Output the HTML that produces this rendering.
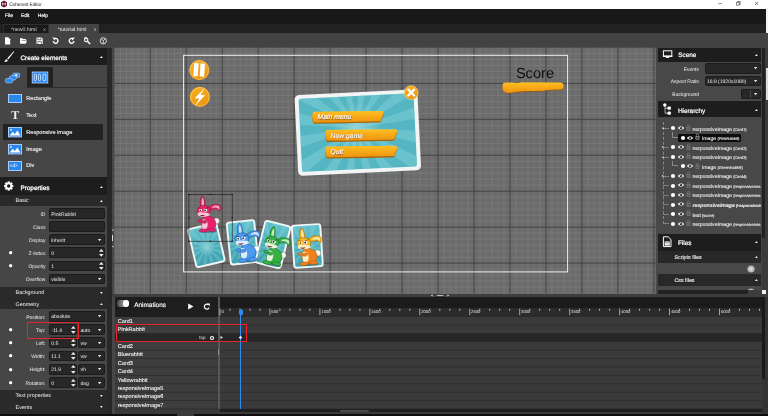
<!DOCTYPE html>
<html><head><meta charset="utf-8"><title>Coherent Editor</title>
<style>
*{box-sizing:border-box;margin:0;padding:0}
html,body{width:768px;height:416px;overflow:hidden;background:#434343;text-rendering:geometricPrecision;font-family:"Liberation Sans",sans-serif;color:#fff}
#root{position:absolute;left:0;top:0;width:768px;height:416px;overflow:hidden;will-change:transform;background:#434343}
.a{position:absolute}
.t{position:absolute;white-space:nowrap;line-height:1;color:#f2f2f2}
.inp{position:absolute;background:#272727;border:1px solid #1b1b1b;border-radius:1.500px}
.lbl{position:absolute;white-space:nowrap;line-height:1;color:#eee;text-align:right}
.v{position:absolute;white-space:nowrap;line-height:1;color:#eee}
</style></head><body><div id="root">
<div class="a" style="left:0px;top:0px;width:768px;height:8.8px;background:#fff;"></div>
<div class="a" style="left:0px;top:8.8px;width:768px;height:14.9px;background:#181818;"></div>
<div class="a" style="left:0px;top:23.7px;width:768px;height:9.5px;background:#212121;"></div>
<div class="a" style="left:0px;top:33px;width:768px;height:14.8px;background:#434343;"></div>
<div class="a" style="left:766.2px;top:8.8px;width:1.8px;height:24.4px;background:#f4f4f4;"></div>
<svg class="a" style="left:0;top:0" width="9" height="9" viewBox="0 0 9 9"><polygon points="4,0.6 7,2.3 7,5.900 4,7.600 1,5.900 1,2.300" fill="#6b1a3a"/><path d="M2.600 5.400V3L4 4.400L5.400 3V5.400" stroke="#fff" stroke-width=".7" fill="none"/></svg>
<div class="t" style="left:9.2px;top:4px;font-size:4.9px;color:#1c1c1c;letter-spacing:-.12px">Coherent Editor</div>
<svg class="a" style="left:712px;top:0" width="56" height="9" viewBox="0 0 56 9"><path d="M6.500 3.600h3.400M24.500 2.400h2.800v2.800h-2.800zM25.400 2.400v-.9h2.800v2.800h-.9M43 1.800l3.200 3.200M46.200 1.800L43 5" stroke="#222" stroke-width=".55" fill="none"/></svg>
<div class="t" style="left:5px;top:15px;font-size:4.9px;color:#f4f4f4;-webkit-text-stroke:.2px #f4f4f4">File</div>
<div class="t" style="left:21px;top:15px;font-size:4.9px;color:#f4f4f4;-webkit-text-stroke:.2px #f4f4f4">Edit</div>
<div class="t" style="left:37.8px;top:15px;font-size:4.9px;color:#f4f4f4;-webkit-text-stroke:.2px #f4f4f4">Help</div>
<div class="a" style="left:3px;top:24px;width:45.800px;height:9.200px;background:#1a1a1a;border:1px solid #303030;border-bottom:0"></div>
<div class="a" style="left:49.2px;top:23.8px;width:49.9px;height:9.4px;background:#434343;"></div>
<div class="t" style="left:10.9px;top:28px;font-size:5.2px;color:#d8d8d8;">*new0.html</div>
<div class="t" style="left:43.2px;top:28px;font-size:5px;color:#aaa;">x</div>
<div class="t" style="left:57.7px;top:28px;font-size:5.2px;color:#e6e6e6;">*tutorial.html</div>
<div class="t" style="left:93.8px;top:28px;font-size:5px;color:#c0c0c0;">x</div>
<svg class="a" style="left:0;top:33px" width="112" height="15" viewBox="0 0 112 15">
<g fill="#fff" stroke="none">
<path d="M5 4.200h3.200l2 2v5.200H5z"/>
<path d="M20 5.200h2.500l.8.8H26v1h-4.300L20.600 10.200H20zM21.200 7.600h5.800l-1.200 3.200h-5.600z"/>
<path d="M36.500 4.400h5.200l1 1v5.600h-6.200z"/>
</g>
<path d="M37.800 4.600v2.200h3.200V4.600M37.800 10.800V8.600h3.600v2.200" stroke="#434343" stroke-width=".7" fill="none"/>
<g fill="none" stroke="#fff" stroke-width="1.200">
<path d="M53.900 6.100A2.400 2.400 0 1 1 53.200 8.200" stroke-width="1.350"/>
<path d="M73.300 6.100A2.400 2.400 0 1 0 74 8.200" stroke-width="1.350"/>
<circle cx="86.200" cy="7" r="1.700" stroke-width="1.100"/><path d="M87.600 8.400l2.600 2.600" stroke-width="1.400"/><path d="M84 5.200l1.600-.8 1.600.6" stroke-width=".9"/>
<circle cx="103.300" cy="7.800" r="3.100" stroke-width=".8"/><path d="M103.300 10.600V7.600M101.300 5.800l2 1.800 2-1.800" stroke-width=".7"/>
</g>
<path d="M52.200 4.600l3.100 .2-.2 3z" fill="#fff"/><path d="M75 4.600l-3.100 .2 .2 3z" fill="#fff"/>
</svg>
<div class="a" style="left:0px;top:47.8px;width:106.6px;height:368.2px;background:#464646;"></div>
<div class="a" style="left:106.6px;top:47.8px;width:5.2px;height:368.2px;background:#282828;"></div>
<div class="a" style="left:111.8px;top:47.8px;width:2.6px;height:368.2px;background:#474747;"></div>
<svg class="a" style="left:110.6px;top:227.9px" width="4" height="3.6" viewBox="0 0 4 3.6"><path d="M1 2.6L2 1L3 2.6z" fill="#ddd"/></svg>
<div class="a" style="left:112.3px;top:234.8px;width:0.8px;height:6.4px;background:#ddd;"></div>
<svg class="a" style="left:110.6px;top:244.7px" width="4" height="3.6" viewBox="0 0 4 3.6"><path d="M1 1L2 2.6L3 1z" fill="#ddd"/></svg>
<div class="a" style="left:0px;top:47.8px;width:106.6px;height:17px;background:#1d1d1d;"></div>
<svg class="a" style="left:3px;top:50px" width="12" height="14" viewBox="0 0 12 14"><path d="M10.600 1.200L4.200 8.600l1 1L11.200 1.800z" fill="#fff"/><path d="M3.600 9.200c-1.400.2-1.200 1.800-2.600 2.400 1.800.6 3.600-.2 3.800-1.400z" fill="#fff"/></svg>
<div class="t" style="left:20.4px;top:56px;font-size:6.4px;color:#fff;-webkit-text-stroke:.25px #fff">Create elements</div>
<svg class="a" style="left:98.9px;top:55.15px" width="4.8" height="4.1" viewBox="0 0 4.8 4.1"><path d="M1 3.1L2.4 1L3.8 3.1z" fill="#eee"/></svg>
<div class="a" style="left:26.9px;top:66.9px;width:26px;height:20.6px;background:#222;"></div>
<div class="a" style="left:26.9px;top:87.2px;width:79.7px;height:0.8px;background:#2e2e2e;"></div>
<svg class="a" style="left:4px;top:70px" width="18" height="15" viewBox="0 0 18 15"><g fill="#2b86ee" stroke="#9cc6fa" stroke-width=".7"><rect x="8.800" y="3.200" width="6.800" height="4.200" rx=".8"/><rect x="5" y="5.800" width="7.400" height="4.200" rx="1.600" transform="skewX(-18) translate(2.600 0)"/><rect x="1.400" y="8.600" width="7.200" height="4.200" rx="1.400"/></g><rect x="11" y="4.200" width="2.400" height="2" fill="#dfeeff"/></svg>
<svg class="a" style="left:31px;top:71px" width="18" height="13" viewBox="0 0 18 13"><rect x="1.200" y="1" width="15.600" height="11" fill="#2b86ee" stroke="#b9d6fb" stroke-width=".8"/><g fill="none" stroke="#e8f2ff" stroke-width=".8"><rect x="3.300" y="3.200" width="2.200" height="6.400" rx="1"/><rect x="7.400" y="3.200" width="2.200" height="6.400" rx="1"/><rect x="12" y="3.200" width="2.800" height="6.400" rx=".6"/></g></svg>
<div class="a" style="left:8px;top:94px;width:14px;height:9.400px;background:#2b86ee;border:1px solid #a9cdfb"></div>
<div class="v" style="left:26.3px;top:97px;font-size:5.6px;color:#f0f0f0;-webkit-text-stroke:.12px #f0f0f0">Rectangle</div>
<div class="t" style="left:11.300px;top:108.800px;font-size:12px;font-family:'Liberation Serif',serif;font-weight:bold;color:#f4f1e6">T</div>
<div class="v" style="left:26.3px;top:114px;font-size:5.6px;color:#f0f0f0;-webkit-text-stroke:.12px #f0f0f0">Text</div>
<div class="a" style="left:3px;top:123.8px;width:100px;height:16.4px;background:#222;"></div>
<svg class="a" style="left:8px;top:127px" width="14" height="11" viewBox="0 0 14 11"><rect x=".5" y=".5" width="13" height="9.400" fill="#2b86ee" stroke="#a9cdfb"/><path d="M1.600 8.600l3.200-3.800 2 2.200 2.600-3.600 3 5.200z" fill="#fff"/><circle cx="3" cy="2.800" r=".9" fill="#fff"/></svg>
<div class="v" style="left:26.3px;top:131px;font-size:5.6px;color:#f0f0f0;-webkit-text-stroke:.12px #f0f0f0">Responsive image</div>
<svg class="a" style="left:8px;top:144px" width="14" height="11" viewBox="0 0 14 11"><rect x=".5" y=".5" width="13" height="9.400" fill="#2b86ee" stroke="#a9cdfb"/><path d="M1.600 8.600l3.200-3.800 2 2.200 2.600-3.600 3 5.200z" fill="#fff"/><circle cx="3" cy="2.800" r=".9" fill="#fff"/></svg>
<div class="v" style="left:26.3px;top:148px;font-size:5.6px;color:#f0f0f0;-webkit-text-stroke:.12px #f0f0f0">Image</div>
<div class="a" style="left:8px;top:161px;width:14px;height:9.800px;background:#2b86ee;border:1px solid #a9cdfb"></div>
<div class="t" style="left:9.6px;top:165px;font-size:4.8px;color:#fff;">&lt;d&gt;</div>
<div class="v" style="left:26.3px;top:164px;font-size:5.6px;color:#f0f0f0;-webkit-text-stroke:.12px #f0f0f0">Div</div>
<div class="a" style="left:0px;top:177.3px;width:106.6px;height:17.4px;background:#1d1d1d;"></div>
<svg class="a" style="left:3px;top:179.600px" width="12" height="12" viewBox="0 0 12 12"><g transform="translate(5.700 6) scale(.92)"><g fill="#fff"><rect x="-1.200" y="-5" width="2.400" height="10"/><rect x="-1.200" y="-5" width="2.400" height="10" transform="rotate(45)"/><rect x="-1.200" y="-5" width="2.400" height="10" transform="rotate(90)"/><rect x="-1.200" y="-5" width="2.400" height="10" transform="rotate(135)"/><circle r="3.700"/></g><circle r="1.900" fill="#1d1d1d"/></g></svg>
<div class="t" style="left:20.4px;top:186px;font-size:6.4px;color:#fff;-webkit-text-stroke:.25px #fff">Properties</div>
<svg class="a" style="left:98.9px;top:184.95px" width="4.8" height="4.1" viewBox="0 0 4.8 4.1"><path d="M1 3.1L2.4 1L3.8 3.1z" fill="#eee"/></svg>
<div class="a" style="left:0px;top:194.7px;width:106.6px;height:10.9px;background:#2a2a2a;"></div>
<div class="v" style="left:15.6px;top:199px;font-size:5.4px;">Basic</div>
<svg class="a" style="left:98.9px;top:198.95px" width="4.8" height="4.1" viewBox="0 0 4.8 4.1"><path d="M1 3.1L2.4 1L3.8 3.1z" fill="#eee"/></svg>
<div class="lbl" style="left:-34.6px;width:80px;top:213px;font-size:5px;">ID</div>
<div class="inp" style="left:49.2px;top:208px;width:56px;height:10.8px"></div>
<div class="v" style="left:51.2px;top:213px;font-size:5.1px;">PinkRabbit</div>
<div class="lbl" style="left:-34.6px;width:80px;top:226px;font-size:5px;">Class</div>
<div class="inp" style="left:49.2px;top:221.1px;width:56px;height:10.8px"></div>
<div class="lbl" style="left:-34.6px;width:80px;top:239px;font-size:5px;">Display</div>
<div class="inp" style="left:49.2px;top:234.1px;width:56px;height:10.8px"></div>
<div class="v" style="left:51.2px;top:239px;font-size:5.1px;">inherit</div>
<svg class="a" style="left:97px;top:237.65px" width="5.2" height="4.3" viewBox="0 0 5.2 4.3"><path d="M1 1L2.6 3.3L4.2 1z" fill="#eee"/></svg>
<svg class="a" style="left:8.15px;top:250.05px" width="5.3" height="5.3" viewBox="0 0 5.3 5.3"><circle cx="2.65" cy="2.65" r="1.65" fill="#fff"/></svg>
<div class="lbl" style="left:-34.6px;width:80px;top:252px;font-size:5px;">Z-Index</div>
<div class="inp" style="left:49.2px;top:247.3px;width:56px;height:10.8px"></div>
<div class="v" style="left:51.2px;top:252px;font-size:5.1px;">0</div>
<svg class="a" style="left:97.9px;top:247.8px" width="6.6" height="4.8" viewBox="0 0 6.6 4.8"><path d="M1 3.8L3.3 1L5.6 3.8z" fill="#eee"/></svg>
<svg class="a" style="left:97.9px;top:253px" width="6.6" height="4.8" viewBox="0 0 6.6 4.8"><path d="M1 1L3.3 3.8L5.6 1z" fill="#eee"/></svg>
<svg class="a" style="left:8.15px;top:263.25px" width="5.3" height="5.3" viewBox="0 0 5.3 5.3"><circle cx="2.65" cy="2.65" r="1.65" fill="#fff"/></svg>
<div class="lbl" style="left:-34.6px;width:80px;top:265px;font-size:5px;">Opacity</div>
<div class="inp" style="left:49.2px;top:260.5px;width:56px;height:10.8px"></div>
<div class="v" style="left:51.2px;top:265px;font-size:5.1px;">1</div>
<svg class="a" style="left:97.9px;top:261px" width="6.6" height="4.8" viewBox="0 0 6.6 4.8"><path d="M1 3.8L3.3 1L5.6 3.8z" fill="#eee"/></svg>
<svg class="a" style="left:97.9px;top:266.2px" width="6.6" height="4.8" viewBox="0 0 6.6 4.8"><path d="M1 1L3.3 3.8L5.6 1z" fill="#eee"/></svg>
<div class="lbl" style="left:-34.6px;width:80px;top:278px;font-size:5px;">Overflow</div>
<div class="inp" style="left:49.2px;top:273.7px;width:56px;height:10.8px"></div>
<div class="v" style="left:51.2px;top:278px;font-size:5.1px;">visible</div>
<svg class="a" style="left:97px;top:277.25px" width="5.2" height="4.3" viewBox="0 0 5.2 4.3"><path d="M1 1L2.6 3.3L4.2 1z" fill="#eee"/></svg>
<div class="a" style="left:0px;top:287.1px;width:106.6px;height:21.8px;background:#2a2a2a;"></div>
<div class="v" style="left:15.6px;top:291px;font-size:5.4px;">Background</div>
<svg class="a" style="left:98.9px;top:290.55px" width="4.8" height="4.1" viewBox="0 0 4.8 4.1"><path d="M1 1L2.4 3.1L3.8 1z" fill="#eee"/></svg>
<div class="v" style="left:15.6px;top:303px;font-size:5.4px;">Geometry</div>
<svg class="a" style="left:98.9px;top:302.35px" width="4.8" height="4.1" viewBox="0 0 4.8 4.1"><path d="M1 3.1L2.4 1L3.8 3.1z" fill="#eee"/></svg>
<div class="lbl" style="left:-34.6px;width:80px;top:316px;font-size:5px;">Position:</div>
<div class="inp" style="left:49.2px;top:310.8px;width:56px;height:10.8px"></div>
<div class="v" style="left:51.2px;top:315px;font-size:5.1px;">absolute</div>
<svg class="a" style="left:97px;top:314.35px" width="5.2" height="4.3" viewBox="0 0 5.2 4.3"><path d="M1 1L2.6 3.3L4.2 1z" fill="#eee"/></svg>
<svg class="a" style="left:8.15px;top:326.85px" width="5.3" height="5.3" viewBox="0 0 5.3 5.3"><circle cx="2.65" cy="2.65" r="1.65" fill="#fff"/></svg>
<div class="lbl" style="left:-34.6px;width:80px;top:329px;font-size:5px;">Top:</div>
<div class="inp" style="left:49.2px;top:324.1px;width:28px;height:10.8px"></div>
<div class="v" style="left:51.2px;top:329px;font-size:5.1px;">-11.6</div>
<svg class="a" style="left:70.3px;top:324.6px" width="6.6" height="4.8" viewBox="0 0 6.6 4.8"><path d="M1 3.8L3.3 1L5.6 3.8z" fill="#eee"/></svg>
<svg class="a" style="left:70.3px;top:329.8px" width="6.6" height="4.8" viewBox="0 0 6.6 4.8"><path d="M1 1L3.3 3.8L5.6 1z" fill="#eee"/></svg>
<div class="inp" style="left:78.4px;top:324.1px;width:26.8px;height:10.8px"></div>
<div class="v" style="left:80.4px;top:329px;font-size:5.1px;">auto</div>
<svg class="a" style="left:97px;top:327.65px" width="5.2" height="4.3" viewBox="0 0 5.2 4.3"><path d="M1 1L2.6 3.3L4.2 1z" fill="#eee"/></svg>
<svg class="a" style="left:8.15px;top:340.05px" width="5.3" height="5.3" viewBox="0 0 5.3 5.3"><circle cx="2.65" cy="2.65" r="1.65" fill="#fff"/></svg>
<div class="lbl" style="left:-34.6px;width:80px;top:342px;font-size:5px;">Left:</div>
<div class="inp" style="left:49.2px;top:337.3px;width:28px;height:10.8px"></div>
<div class="v" style="left:51.2px;top:342px;font-size:5.1px;">0.5</div>
<svg class="a" style="left:70.3px;top:337.8px" width="6.6" height="4.8" viewBox="0 0 6.6 4.8"><path d="M1 3.8L3.3 1L5.6 3.8z" fill="#eee"/></svg>
<svg class="a" style="left:70.3px;top:343px" width="6.6" height="4.8" viewBox="0 0 6.6 4.8"><path d="M1 1L3.3 3.8L5.6 1z" fill="#eee"/></svg>
<div class="inp" style="left:78.4px;top:337.3px;width:26.8px;height:10.8px"></div>
<div class="v" style="left:80.4px;top:342px;font-size:5.1px;">vw</div>
<svg class="a" style="left:97px;top:340.85px" width="5.2" height="4.3" viewBox="0 0 5.2 4.3"><path d="M1 1L2.6 3.3L4.2 1z" fill="#eee"/></svg>
<svg class="a" style="left:8.15px;top:353.25px" width="5.3" height="5.3" viewBox="0 0 5.3 5.3"><circle cx="2.65" cy="2.65" r="1.65" fill="#fff"/></svg>
<div class="lbl" style="left:-34.6px;width:80px;top:355px;font-size:5px;">Width:</div>
<div class="inp" style="left:49.2px;top:350.5px;width:28px;height:10.8px"></div>
<div class="v" style="left:51.2px;top:355px;font-size:5.1px;">11.1</div>
<svg class="a" style="left:70.3px;top:351px" width="6.6" height="4.8" viewBox="0 0 6.6 4.8"><path d="M1 3.8L3.3 1L5.6 3.8z" fill="#eee"/></svg>
<svg class="a" style="left:70.3px;top:356.2px" width="6.6" height="4.8" viewBox="0 0 6.6 4.8"><path d="M1 1L3.3 3.8L5.6 1z" fill="#eee"/></svg>
<div class="inp" style="left:78.4px;top:350.5px;width:26.8px;height:10.8px"></div>
<div class="v" style="left:80.4px;top:355px;font-size:5.1px;">vw</div>
<svg class="a" style="left:97px;top:354.05px" width="5.2" height="4.3" viewBox="0 0 5.2 4.3"><path d="M1 1L2.6 3.3L4.2 1z" fill="#eee"/></svg>
<svg class="a" style="left:8.15px;top:366.55px" width="5.3" height="5.3" viewBox="0 0 5.3 5.3"><circle cx="2.65" cy="2.65" r="1.65" fill="#fff"/></svg>
<div class="lbl" style="left:-34.6px;width:80px;top:368px;font-size:5px;">Height:</div>
<div class="inp" style="left:49.2px;top:363.8px;width:28px;height:10.8px"></div>
<div class="v" style="left:51.2px;top:368px;font-size:5.1px;">21.9</div>
<svg class="a" style="left:70.3px;top:364.3px" width="6.6" height="4.8" viewBox="0 0 6.6 4.8"><path d="M1 3.8L3.3 1L5.6 3.8z" fill="#eee"/></svg>
<svg class="a" style="left:70.3px;top:369.5px" width="6.6" height="4.8" viewBox="0 0 6.6 4.8"><path d="M1 1L3.3 3.8L5.6 1z" fill="#eee"/></svg>
<div class="inp" style="left:78.4px;top:363.8px;width:26.8px;height:10.8px"></div>
<div class="v" style="left:80.4px;top:368px;font-size:5.1px;">vh</div>
<svg class="a" style="left:97px;top:367.35px" width="5.2" height="4.3" viewBox="0 0 5.2 4.3"><path d="M1 1L2.6 3.3L4.2 1z" fill="#eee"/></svg>
<svg class="a" style="left:8.15px;top:379.75px" width="5.3" height="5.3" viewBox="0 0 5.3 5.3"><circle cx="2.65" cy="2.65" r="1.65" fill="#fff"/></svg>
<div class="lbl" style="left:-34.6px;width:80px;top:382px;font-size:5px;">Rotation:</div>
<div class="inp" style="left:49.2px;top:377px;width:28px;height:10.8px"></div>
<div class="v" style="left:51.2px;top:382px;font-size:5.1px;">0</div>
<svg class="a" style="left:70.3px;top:377.5px" width="6.6" height="4.8" viewBox="0 0 6.6 4.8"><path d="M1 3.8L3.3 1L5.6 3.8z" fill="#eee"/></svg>
<svg class="a" style="left:70.3px;top:382.7px" width="6.6" height="4.8" viewBox="0 0 6.6 4.8"><path d="M1 1L3.3 3.8L5.6 1z" fill="#eee"/></svg>
<div class="inp" style="left:78.4px;top:377px;width:26.8px;height:10.8px"></div>
<div class="v" style="left:80.4px;top:382px;font-size:5.1px;">deg</div>
<svg class="a" style="left:97px;top:380.55px" width="5.2" height="4.3" viewBox="0 0 5.2 4.3"><path d="M1 1L2.6 3.3L4.2 1z" fill="#eee"/></svg>
<div class="a" style="left:27px;top:322.200px;width:52.200px;height:16.400px;border:1px solid #e8232e"></div>
<div class="a" style="left:0px;top:390.1px;width:106.6px;height:24.3px;background:#2a2a2a;"></div>
<div class="v" style="left:15.6px;top:394px;font-size:5.4px;">Text properties</div>
<svg class="a" style="left:98.9px;top:393.55px" width="4.8" height="4.1" viewBox="0 0 4.8 4.1"><path d="M1 1L2.4 3.1L3.8 1z" fill="#eee"/></svg>
<div class="v" style="left:15.6px;top:406px;font-size:5.4px;">Events</div>
<svg class="a" style="left:98.9px;top:404.95px" width="4.8" height="4.1" viewBox="0 0 4.8 4.1"><path d="M1 1L2.4 3.1L3.8 1z" fill="#eee"/></svg>
<svg class="a" style="left:113px;top:47px" width="544" height="248" viewBox="113 47 544 248" font-family="Liberation Sans, sans-serif">
<defs><pattern id="gmin" x="114.450" y="47.460" width="5.993" height="5.993" patternUnits="userSpaceOnUse"><path d="M0 0H6.100M0 0V6.100" stroke="#7b7b7b" stroke-width=".8" fill="none"/></pattern>
<pattern id="gmaj" x="114.450" y="47.460" width="35.960" height="35.960" patternUnits="userSpaceOnUse"><path d="M0 0H36.200M0 0V36.200" stroke="#3a3a3a" stroke-width="1.100" fill="none"/></pattern><linearGradient id="cg" x1="0" y1="0" x2="0" y2="1"><stop offset="0" stop-color="#63c0cb"/><stop offset="1" stop-color="#3e9fad"/></linearGradient><linearGradient id="og" x1="0" y1="0" x2=".6" y2="1"><stop offset="0" stop-color="#fbb324"/><stop offset="1" stop-color="#ec9610"/></linearGradient><linearGradient id="bg" x1="0" y1="0" x2="0" y2="1"><stop offset="0" stop-color="#fcc024"/><stop offset=".5" stop-color="#f7a916"/><stop offset="1" stop-color="#ee9410"/></linearGradient><radialGradient id="glow"><stop offset="0" stop-color="#b8eaee" stop-opacity=".55"/><stop offset="1" stop-color="#b8eaee" stop-opacity="0"/></radialGradient></defs>
<rect x="114.300" y="47.700" width="541.600" height="246" fill="#6b6b6b"/>
<path d="M120.30 47.700V293.700M126.29 47.700V293.700M132.28 47.700V293.700M138.28 47.700V293.700M144.28 47.700V293.700M156.26 47.700V293.700M162.26 47.700V293.700M168.25 47.700V293.700M174.25 47.700V293.700M180.25 47.700V293.700M192.24 47.700V293.700M198.23 47.700V293.700M204.22 47.700V293.700M210.22 47.700V293.700M216.22 47.700V293.700M228.20 47.700V293.700M234.20 47.700V293.700M240.19 47.700V293.700M246.19 47.700V293.700M252.19 47.700V293.700M264.18 47.700V293.700M270.17 47.700V293.700M276.16 47.700V293.700M282.16 47.700V293.700M288.15 47.700V293.700M300.14 47.700V293.700M306.14 47.700V293.700M312.13 47.700V293.700M318.13 47.700V293.700M324.12 47.700V293.700M336.11 47.700V293.700M342.11 47.700V293.700M348.10 47.700V293.700M354.10 47.700V293.700M360.09 47.700V293.700M372.09 47.700V293.700M378.08 47.700V293.700M384.07 47.700V293.700M390.07 47.700V293.700M396.06 47.700V293.700M408.06 47.700V293.700M414.05 47.700V293.700M420.05 47.700V293.700M426.04 47.700V293.700M432.03 47.700V293.700M444.02 47.700V293.700M450.02 47.700V293.700M456.01 47.700V293.700M462.01 47.700V293.700M468.00 47.700V293.700M480.00 47.700V293.700M485.99 47.700V293.700M491.99 47.700V293.700M497.98 47.700V293.700M503.97 47.700V293.700M515.96 47.700V293.700M521.96 47.700V293.700M527.95 47.700V293.700M533.95 47.700V293.700M539.94 47.700V293.700M551.93 47.700V293.700M557.93 47.700V293.700M563.92 47.700V293.700M569.92 47.700V293.700M575.91 47.700V293.700M587.90 47.700V293.700M593.90 47.700V293.700M599.89 47.700V293.700M605.89 47.700V293.700M611.88 47.700V293.700M623.88 47.700V293.700M629.87 47.700V293.700M635.86 47.700V293.700M641.86 47.700V293.700M647.85 47.700V293.700M114.300 53.45H655.900M114.300 59.44H655.900M114.300 65.43H655.900M114.300 71.42H655.900M114.300 77.41H655.900M114.300 89.39H655.900M114.300 95.38H655.900M114.300 101.37H655.900M114.300 107.36H655.900M114.300 113.35H655.900M114.300 125.33H655.900M114.300 131.32H655.900M114.300 137.31H655.900M114.300 143.30H655.900M114.300 149.29H655.900M114.300 161.27H655.900M114.300 167.26H655.900M114.300 173.25H655.900M114.300 179.24H655.900M114.300 185.23H655.900M114.300 197.21H655.900M114.300 203.20H655.900M114.300 209.19H655.900M114.300 215.18H655.900M114.300 221.17H655.900M114.300 233.15H655.900M114.300 239.14H655.900M114.300 245.13H655.900M114.300 251.12H655.900M114.300 257.11H655.900M114.300 269.09H655.900M114.300 275.08H655.900M114.300 281.07H655.900M114.300 287.06H655.900M114.300 293.05H655.900" stroke="#7b7b7b" stroke-width=".8" fill="none"/>
<path d="M150.27 47.700V293.700M186.24 47.700V293.700M222.21 47.700V293.700M258.18 47.700V293.700M294.15 47.700V293.700M330.12 47.700V293.700M366.09 47.700V293.700M402.06 47.700V293.700M438.03 47.700V293.700M474.00 47.700V293.700M509.97 47.700V293.700M545.94 47.700V293.700M581.91 47.700V293.700M617.88 47.700V293.700M653.85 47.700V293.700M114.300 83.40H655.900M114.300 119.34H655.900M114.300 155.28H655.900M114.300 191.22H655.900M114.300 227.16H655.900M114.300 263.10H655.900" stroke="#444" stroke-width="1" fill="none"/>
<rect x="183.600" y="55.300" width="384" height="216.600" fill="none" stroke="#f0f0f0" stroke-width="1"/>
<g transform="translate(199.300 70.100)"><circle r="10.100" fill="url(#og)"/><circle r="9.300" fill="none" stroke="#fcd27a" stroke-width=".7" opacity=".8"/><g transform="rotate(4)" fill="#fff"><rect x="-5.600" y="-6.800" width="4.500" height="13.200" rx=".5"/><rect x=".8" y="-6.800" width="4.500" height="13.200" rx=".5"/></g></g>
<g transform="translate(199.900 96.900)"><circle r="10.100" fill="url(#og)"/><circle r="9.300" fill="none" stroke="#fcd27a" stroke-width=".7" opacity=".8"/><path d="M4.600 -8.600L-5.200 1.400L-.6 1.700L-4.800 9L5.200 -1.600L.8 -1.800z" fill="#fff"/></g>
<text x="515.900" y="77.900" font-size="14.600" fill="#0e0e0e">Score</text>
<path d="M503.600 83.600C509 82.600 515 83.600 518 83.600L522 82.900L560 83.100C563.400 83.300 564 85.600 563.400 88.200C563 89.900 561 90.300 557 90.300L546 90.600L544 91.400C534 91.800 520 91.400 512 93.100C506 94.200 502.700 92.400 502.600 88.600C502.500 86 502.700 84.300 503.600 83.600z" fill="#9a5a08"/>
<path d="M503.600 83.600C509 82.600 515 83.600 518 83.600L522 82.900L560 83.100C563.400 83.300 564 85.600 563.400 88.200C563 89.900 561 90.300 557 90.300L546 90.600L544 91.400C534 91.800 520 91.400 512 93.100C506 94.200 502.700 92.400 502.600 88.600C502.500 86 502.700 84.300 503.600 83.600z" fill="url(#bg)" transform="translate(0 -.7)"/>
<g transform="translate(357.800 132.600) rotate(-2.800)"><clipPath id="dc"><rect x="-57.500" y="-36.600" width="115" height="73.200" rx="2"/></clipPath><rect x="-61.500" y="-40.400" width="123" height="80.800" rx="4.500" fill="#f1f5f5"/><rect x="-57.500" y="-36.600" width="115" height="73.200" rx="2" fill="#55b5c2"/><g clip-path="url(#dc)"><path d="M-1 -5L78.6 3.0L75.5 18.4zM-1 -5L69.5 32.8L60.7 45.9zM-1 -5L49.6 56.9L36.6 65.6zM-1 -5L22.1 71.6L6.7 74.6zM-1 -5L-9.0 74.6L-24.4 71.5zM-1 -5L-38.8 65.5L-51.9 56.7zM-1 -5L-62.9 45.6L-71.6 32.6zM-1 -5L-77.6 18.1L-80.6 2.7zM-1 -5L-80.6 -13.0L-77.5 -28.4zM-1 -5L-71.5 -42.8L-62.7 -55.9zM-1 -5L-51.6 -66.9L-38.6 -75.6zM-1 -5L-24.1 -81.6L-8.7 -84.6zM-1 -5L7.0 -84.6L22.4 -81.5zM-1 -5L36.8 -75.5L49.9 -66.7zM-1 -5L60.9 -55.6L69.6 -42.6zM-1 -5L75.6 -28.1L78.6 -12.7z" fill="#86d3dc" opacity="0.42"/><circle cx="-1" cy="-5" r="26" fill="url(#glow)"/></g></g>
<path d="M313.3 113.1L344.475 112.5L382.3 112.3L383.8 113.9L382.2 118L380.4 122.5L356.63 123.1L333.75 123.5L313.9 123.7C311.7 120.7 311.9 115.3 313.3 113.1z" fill="#a8650c"/><path d="M313.3 113.1L344.475 112.5L382.3 112.3L383.8 113.9L382.2 118L380.4 122.5L356.63 123.1L333.75 123.5L313.9 123.7C311.7 120.7 311.9 115.3 313.3 113.1z" fill="url(#bg)" transform="translate(0 -1.300)"/><text x="318" y="119.9" font-size="6.800" font-style="italic" fill="#a8650c" stroke="#a8650c" stroke-width=".4">Main menu</text><text x="317.6" y="119.4" font-size="6.800" font-style="italic" fill="#fff" stroke="#fff" stroke-width=".18">Main menu</text>
<path d="M326.5 131.3L357.9 130.7L396 130.5L397.5 132.1L395.9 136.2L394.1 140.7L370.14 141.3L347.1 141.7L327.1 141.9C324.9 138.9 325.1 133.5 326.5 131.3z" fill="#a8650c"/><path d="M326.5 131.3L357.9 130.7L396 130.5L397.5 132.1L395.9 136.2L394.1 140.7L370.14 141.3L347.1 141.7L327.1 141.9C324.9 138.9 325.1 133.5 326.5 131.3z" fill="url(#bg)" transform="translate(0 -1.300)"/><text x="331" y="138.1" font-size="6.800" font-style="italic" fill="#a8650c" stroke="#a8650c" stroke-width=".4">New game</text><text x="330.6" y="137.6" font-size="6.800" font-style="italic" fill="#fff" stroke="#fff" stroke-width=".18">New game</text>
<path d="M326.5 147.9L357.9 147.3L396 147.1L397.5 148.7L395.9 152.8L394.1 157.3L370.14 157.9L347.1 158.3L327.1 158.5C324.9 155.5 325.1 150.1 326.5 147.9z" fill="#a8650c"/><path d="M326.5 147.9L357.9 147.3L396 147.1L397.5 148.7L395.9 152.8L394.1 157.3L370.14 157.9L347.1 158.3L327.1 158.5C324.9 155.5 325.1 150.1 326.5 147.9z" fill="url(#bg)" transform="translate(0 -1.300)"/><text x="331" y="154.7" font-size="6.800" font-style="italic" fill="#a8650c" stroke="#a8650c" stroke-width=".4">Quit</text><text x="330.6" y="154.2" font-size="6.800" font-style="italic" fill="#fff" stroke="#fff" stroke-width=".18">Quit</text>
<g><circle cx="411.200" cy="92.600" r="6.900" fill="url(#og)" stroke="#fcd27a" stroke-width=".7"/><path d="M408.300 89.700l5.800 5.800M414.100 89.700l-5.800 5.800" stroke="#fff" stroke-width="2.400" stroke-linecap="round"/></g>
<g transform="translate(206.4 245.2) rotate(-13)"><clipPath id="cc1"><rect x="-13.6" y="-18.6" width="27.2" height="37.2" rx="1.600"/></clipPath><rect x="-15.5" y="-20.5" width="31" height="41" rx="3.200" fill="#f1f5f5"/><rect x="-13.6" y="-18.6" width="27.2" height="37.2" rx="1.600" fill="url(#cg)"/><g clip-path="url(#cc1)"><path d="M0 2L32.0 2.0L31.2 9.1zM0 2L28.8 15.9L25.0 22.0zM0 2L20.0 27.0L13.9 30.8zM0 2L7.1 33.2L0.0 34.0zM0 2L-7.1 33.2L-13.9 30.8zM0 2L-20.0 27.0L-25.0 22.0zM0 2L-28.8 15.9L-31.2 9.1zM0 2L-32.0 2.0L-31.2 -5.1zM0 2L-28.8 -11.9L-25.0 -18.0zM0 2L-20.0 -23.0L-13.9 -26.8zM0 2L-7.1 -29.2L-0.0 -30.0zM0 2L7.1 -29.2L13.9 -26.8zM0 2L20.0 -23.0L25.0 -18.0zM0 2L28.8 -11.9L31.2 -5.1z" fill="#8ad6de" opacity="0.32"/><circle cx="0" cy="2" r="9" fill="url(#glow)"/></g></g>
<g transform="translate(242.5 242.3) rotate(-6)"><clipPath id="cc2"><rect x="-12.85" y="-20.1" width="25.7" height="40.2" rx="1.600"/></clipPath><rect x="-14.75" y="-22" width="29.5" height="44" rx="3.200" fill="#f1f5f5"/><rect x="-12.85" y="-20.1" width="25.7" height="40.2" rx="1.600" fill="url(#cg)"/><g clip-path="url(#cc2)"><path d="M0 2L32.0 2.0L31.2 9.1zM0 2L28.8 15.9L25.0 22.0zM0 2L20.0 27.0L13.9 30.8zM0 2L7.1 33.2L0.0 34.0zM0 2L-7.1 33.2L-13.9 30.8zM0 2L-20.0 27.0L-25.0 22.0zM0 2L-28.8 15.9L-31.2 9.1zM0 2L-32.0 2.0L-31.2 -5.1zM0 2L-28.8 -11.9L-25.0 -18.0zM0 2L-20.0 -23.0L-13.9 -26.8zM0 2L-7.1 -29.2L-0.0 -30.0zM0 2L7.1 -29.2L13.9 -26.8zM0 2L20.0 -23.0L25.0 -18.0zM0 2L28.8 -11.9L31.2 -5.1z" fill="#8ad6de" opacity="0.32"/><circle cx="0" cy="2" r="9" fill="url(#glow)"/></g></g>
<g transform="translate(272.9 244.5) rotate(14)"><clipPath id="cc3"><rect x="-12" y="-20.6" width="24" height="41.2" rx="1.600"/></clipPath><rect x="-13.9" y="-22.5" width="27.8" height="45" rx="3.200" fill="#f1f5f5"/><rect x="-12" y="-20.6" width="24" height="41.2" rx="1.600" fill="url(#cg)"/><g clip-path="url(#cc3)"><path d="M0 2L32.0 2.0L31.2 9.1zM0 2L28.8 15.9L25.0 22.0zM0 2L20.0 27.0L13.9 30.8zM0 2L7.1 33.2L0.0 34.0zM0 2L-7.1 33.2L-13.9 30.8zM0 2L-20.0 27.0L-25.0 22.0zM0 2L-28.8 15.9L-31.2 9.1zM0 2L-32.0 2.0L-31.2 -5.1zM0 2L-28.8 -11.9L-25.0 -18.0zM0 2L-20.0 -23.0L-13.9 -26.8zM0 2L-7.1 -29.2L-0.0 -30.0zM0 2L7.1 -29.2L13.9 -26.8zM0 2L20.0 -23.0L25.0 -18.0zM0 2L28.8 -11.9L31.2 -5.1z" fill="#8ad6de" opacity="0.32"/><circle cx="0" cy="2" r="9" fill="url(#glow)"/></g></g>
<g transform="translate(307.3 245.9) rotate(-3.7)"><clipPath id="cc4"><rect x="-13.3" y="-20.1" width="26.6" height="40.2" rx="1.600"/></clipPath><rect x="-15.2" y="-22" width="30.4" height="44" rx="3.200" fill="#f1f5f5"/><rect x="-13.3" y="-20.1" width="26.6" height="40.2" rx="1.600" fill="url(#cg)"/><g clip-path="url(#cc4)"><path d="M0 2L32.0 2.0L31.2 9.1zM0 2L28.8 15.9L25.0 22.0zM0 2L20.0 27.0L13.9 30.8zM0 2L7.1 33.2L0.0 34.0zM0 2L-7.1 33.2L-13.9 30.8zM0 2L-20.0 27.0L-25.0 22.0zM0 2L-28.8 15.9L-31.2 9.1zM0 2L-32.0 2.0L-31.2 -5.1zM0 2L-28.8 -11.9L-25.0 -18.0zM0 2L-20.0 -23.0L-13.9 -26.8zM0 2L-7.1 -29.2L-0.0 -30.0zM0 2L7.1 -29.2L13.9 -26.8zM0 2L20.0 -23.0L25.0 -18.0zM0 2L28.8 -11.9L31.2 -5.1z" fill="#8ad6de" opacity="0.32"/><circle cx="0" cy="2" r="9" fill="url(#glow)"/></g></g>
<g transform="translate(244.8 242.6) rotate(-4) scale(1.09)">
<ellipse cx="2" cy="17" rx="9" ry="1.600" fill="#1d4a52" opacity=".45"/>
<path d="M2.500 -7.500C6 -10.500 11.500 -10.800 13.600 -9C15 -7.400 14.800 -4.400 13.200 -3C12.400 -5.400 9.500 -6.400 4.500 -4.200z" fill="#4a9af0" stroke="#1f4f9e" stroke-width=".5"/>
<path d="M6 -7.600C8.500 -9.200 11.500 -9.400 12.800 -8.200C13.600 -7 13.400 -5.600 12.800 -4.800C11.600 -6.800 9.200 -7.300 6.400 -6.300z" fill="#e8f1fb" opacity=".8"/>
<path d="M-5 -7.500C-6.800 -12 -6 -16.500 -3.600 -18.600C-1.400 -15.800 -1 -11 -1.400 -7.200z" fill="#4a9af0" stroke="#1f4f9e" stroke-width=".5"/>
<path d="M-4.200 -8.500C-5.200 -12 -4.600 -15 -3.400 -16.800C-2.200 -14.400 -2 -11 -2.300 -8z" fill="#e8f1fb" opacity=".8"/>
<circle cx="10.300" cy="6.500" r="2.900" fill="#fdfdf6" stroke="#1f4f9e" stroke-width=".3"/>
<path d="M-3 3C1 0 8 2 9.500 8C10.500 12.500 7 16 2 16C-3 16 -5 13 -4.500 9z" fill="#4a9af0" stroke="#1f4f9e" stroke-width=".5"/>
<path d="M-3.800 5C-1 4 1.500 6 1.500 10C1.500 13.500 -.5 15.500 -2.500 15.500C-4.500 14 -4.800 10 -3.800 5z" fill="#dcecfb"/>
<ellipse cx="-3" cy="16.200" rx="4.200" ry="1.700" fill="#4a9af0" stroke="#1f4f9e" stroke-width=".4"/>
<ellipse cx="6" cy="15.600" rx="4" ry="1.700" fill="#4a9af0" stroke="#1f4f9e" stroke-width=".4"/>
<ellipse cx="-2.500" cy="-3.500" rx="6.600" ry="5.600" fill="#4a9af0" stroke="#1f4f9e" stroke-width=".5"/>
<path d="M-8.600 -1.500C-7 -2.500 -3 -2.500 1.500 -1.500C3 -1 4 -.5 3.500 .5C1.500 2.500 -5 3 -8 1z" fill="#dcecfb"/>
<ellipse cx="-5.600" cy="-4.300" rx="1.500" ry="1.700" fill="#fff"/><ellipse cx="-.8" cy="-4.300" rx="1.800" ry="1.900" fill="#fff"/>
<circle cx="-5.800" cy="-4" r=".75" fill="#2a1a10"/><circle cx="-1.100" cy="-4" r=".85" fill="#2a1a10"/>
<path d="M-7.600 -6.600l3 1.200M2 -6.800l-3.600 1.400" stroke="#1f4f9e" stroke-width=".9"/>
<path d="M-6.500 .6C-5 2 -2.500 2 -1 .6z" fill="#6b1a1a"/>
<path d="M-4.500 5.500C-7 4.500 -8.500 5.500 -8.500 7C-7 8.500 -5 8 -3.500 7z" fill="#4a9af0" stroke="#1f4f9e" stroke-width=".4"/>
<path d="M0 6C-2.500 5.500 -4.500 6.500 -4.500 8C-3 9.500 -1 9 .5 8z" fill="#4a9af0" stroke="#1f4f9e" stroke-width=".4"/>
</g>
<g transform="translate(273.8 246.3) rotate(12) scale(1.06)">
<ellipse cx="2" cy="17" rx="9" ry="1.600" fill="#1d4a52" opacity=".45"/>
<path d="M2.500 -7.500C6 -10.500 11.500 -10.800 13.600 -9C15 -7.400 14.800 -4.400 13.200 -3C12.400 -5.400 9.500 -6.400 4.500 -4.200z" fill="#35b23f" stroke="#17681f" stroke-width=".5"/>
<path d="M6 -7.600C8.500 -9.200 11.500 -9.400 12.800 -8.200C13.600 -7 13.400 -5.600 12.800 -4.800C11.600 -6.800 9.200 -7.300 6.400 -6.300z" fill="#eef5e6" opacity=".8"/>
<path d="M-5 -7.500C-6.800 -12 -6 -16.500 -3.600 -18.600C-1.400 -15.800 -1 -11 -1.400 -7.200z" fill="#35b23f" stroke="#17681f" stroke-width=".5"/>
<path d="M-4.200 -8.500C-5.200 -12 -4.600 -15 -3.400 -16.800C-2.200 -14.400 -2 -11 -2.300 -8z" fill="#eef5e6" opacity=".8"/>
<circle cx="10.300" cy="6.500" r="2.900" fill="#fdfdf6" stroke="#17681f" stroke-width=".3"/>
<path d="M-3 3C1 0 8 2 9.500 8C10.500 12.500 7 16 2 16C-3 16 -5 13 -4.500 9z" fill="#35b23f" stroke="#17681f" stroke-width=".5"/>
<path d="M-3.800 5C-1 4 1.500 6 1.500 10C1.500 13.500 -.5 15.500 -2.500 15.500C-4.500 14 -4.800 10 -3.800 5z" fill="#e6f3d6"/>
<ellipse cx="-3" cy="16.200" rx="4.200" ry="1.700" fill="#35b23f" stroke="#17681f" stroke-width=".4"/>
<ellipse cx="6" cy="15.600" rx="4" ry="1.700" fill="#35b23f" stroke="#17681f" stroke-width=".4"/>
<ellipse cx="-2.500" cy="-3.500" rx="6.600" ry="5.600" fill="#35b23f" stroke="#17681f" stroke-width=".5"/>
<path d="M-8.600 -1.500C-7 -2.500 -3 -2.500 1.500 -1.500C3 -1 4 -.5 3.500 .5C1.500 2.500 -5 3 -8 1z" fill="#e6f3d6"/>
<ellipse cx="-5.600" cy="-4.300" rx="1.500" ry="1.700" fill="#fff"/><ellipse cx="-.8" cy="-4.300" rx="1.800" ry="1.900" fill="#fff"/>
<circle cx="-5.800" cy="-4" r=".75" fill="#2a1a10"/><circle cx="-1.100" cy="-4" r=".85" fill="#2a1a10"/>
<path d="M-7.600 -6.600l3 1.200M2 -6.800l-3.600 1.400" stroke="#17681f" stroke-width=".9"/>
<path d="M-6.500 .6C-5 2 -2.500 2 -1 .6z" fill="#6b1a1a"/>
<path d="M-4.500 5.500C-7 4.500 -8.500 5.500 -8.500 7C-7 8.500 -5 8 -3.500 7z" fill="#35b23f" stroke="#17681f" stroke-width=".4"/>
<path d="M0 6C-2.500 5.500 -4.500 6.500 -4.500 8C-3 9.500 -1 9 .5 8z" fill="#35b23f" stroke="#17681f" stroke-width=".4"/>
</g>
<g transform="translate(306.6 246.8) rotate(-3) scale(1.04)">
<ellipse cx="2" cy="17" rx="9" ry="1.600" fill="#1d4a52" opacity=".45"/>
<path d="M2.500 -7.500C6 -10.500 11.500 -10.800 13.600 -9C15 -7.400 14.800 -4.400 13.200 -3C12.400 -5.400 9.500 -6.400 4.500 -4.200z" fill="#f6b91c" stroke="#a8560c" stroke-width=".5"/>
<path d="M6 -7.600C8.500 -9.200 11.500 -9.400 12.800 -8.200C13.600 -7 13.400 -5.600 12.800 -4.800C11.600 -6.800 9.200 -7.300 6.400 -6.300z" fill="#fdf3cf" opacity=".8"/>
<path d="M-5 -7.500C-6.800 -12 -6 -16.500 -3.600 -18.600C-1.400 -15.800 -1 -11 -1.400 -7.200z" fill="#f6b91c" stroke="#a8560c" stroke-width=".5"/>
<path d="M-4.200 -8.500C-5.200 -12 -4.600 -15 -3.400 -16.800C-2.200 -14.400 -2 -11 -2.300 -8z" fill="#fdf3cf" opacity=".8"/>
<circle cx="10.300" cy="6.500" r="2.900" fill="#fdfdf6" stroke="#a8560c" stroke-width=".3"/>
<path d="M-3 3C1 0 8 2 9.500 8C10.500 12.500 7 16 2 16C-3 16 -5 13 -4.500 9z" fill="#f17f1c" stroke="#a8560c" stroke-width=".5"/>
<path d="M-3.800 5C-1 4 1.500 6 1.500 10C1.500 13.500 -.5 15.500 -2.500 15.500C-4.500 14 -4.800 10 -3.800 5z" fill="#fbeec2"/>
<ellipse cx="-3" cy="16.200" rx="4.200" ry="1.700" fill="#f17f1c" stroke="#a8560c" stroke-width=".4"/>
<ellipse cx="6" cy="15.600" rx="4" ry="1.700" fill="#f17f1c" stroke="#a8560c" stroke-width=".4"/>
<ellipse cx="-2.500" cy="-3.500" rx="6.600" ry="5.600" fill="#f6b91c" stroke="#a8560c" stroke-width=".5"/>
<path d="M-8.600 -1.500C-7 -2.500 -3 -2.500 1.500 -1.500C3 -1 4 -.5 3.500 .5C1.500 2.500 -5 3 -8 1z" fill="#fbeec2"/>
<ellipse cx="-5.600" cy="-4.300" rx="1.500" ry="1.700" fill="#fff"/><ellipse cx="-.8" cy="-4.300" rx="1.800" ry="1.900" fill="#fff"/>
<circle cx="-5.800" cy="-4" r=".75" fill="#2a1a10"/><circle cx="-1.100" cy="-4" r=".85" fill="#2a1a10"/>
<path d="M-7.600 -6.600l3 1.200M2 -6.800l-3.600 1.400" stroke="#a8560c" stroke-width=".9"/>
<path d="M-6.500 .6C-5 2 -2.500 2 -1 .6z" fill="#6b1a1a"/>
<path d="M-4.500 5.500C-7 4.500 -8.500 5.500 -8.500 7C-7 8.500 -5 8 -3.500 7z" fill="#f17f1c" stroke="#a8560c" stroke-width=".4"/>
<path d="M0 6C-2.500 5.500 -4.500 6.500 -4.500 8C-3 9.500 -1 9 .5 8z" fill="#f17f1c" stroke="#a8560c" stroke-width=".4"/>
</g>
<g transform="translate(206.2 214.4) rotate(0) scale(1)">
<ellipse cx="2" cy="17" rx="9" ry="1.600" fill="#1d4a52" opacity=".45"/>
<path d="M2.500 -7.500C6 -10.500 11.500 -10.800 13.600 -9C15 -7.400 14.800 -4.400 13.200 -3C12.400 -5.400 9.500 -6.400 4.500 -4.200z" fill="#e8236a" stroke="#8c0f3c" stroke-width=".5"/>
<path d="M6 -7.600C8.500 -9.200 11.500 -9.400 12.800 -8.200C13.600 -7 13.400 -5.600 12.800 -4.800C11.600 -6.800 9.200 -7.300 6.400 -6.300z" fill="#f7c6d8" opacity=".8"/>
<path d="M-5 -7.500C-6.800 -12 -6 -16.500 -3.600 -18.600C-1.400 -15.800 -1 -11 -1.400 -7.200z" fill="#e8236a" stroke="#8c0f3c" stroke-width=".5"/>
<path d="M-4.200 -8.500C-5.200 -12 -4.600 -15 -3.400 -16.800C-2.200 -14.400 -2 -11 -2.300 -8z" fill="#f7c6d8" opacity=".8"/>
<circle cx="10.300" cy="6.500" r="2.900" fill="#fdfdf6" stroke="#8c0f3c" stroke-width=".3"/>
<path d="M-3 3C1 0 8 2 9.500 8C10.500 12.500 7 16 2 16C-3 16 -5 13 -4.500 9z" fill="#e8236a" stroke="#8c0f3c" stroke-width=".5"/>
<path d="M-3.800 5C-1 4 1.500 6 1.500 10C1.500 13.500 -.5 15.500 -2.500 15.500C-4.500 14 -4.800 10 -3.800 5z" fill="#f9c2d6"/>
<ellipse cx="-3" cy="16.200" rx="4.200" ry="1.700" fill="#e8236a" stroke="#8c0f3c" stroke-width=".4"/>
<ellipse cx="6" cy="15.600" rx="4" ry="1.700" fill="#e8236a" stroke="#8c0f3c" stroke-width=".4"/>
<ellipse cx="-2.500" cy="-3.500" rx="6.600" ry="5.600" fill="#e8236a" stroke="#8c0f3c" stroke-width=".5"/>
<path d="M-8.600 -1.500C-7 -2.500 -3 -2.500 1.500 -1.500C3 -1 4 -.5 3.500 .5C1.500 2.500 -5 3 -8 1z" fill="#f9c2d6"/>
<ellipse cx="-5.600" cy="-4.300" rx="1.500" ry="1.700" fill="#fff"/><ellipse cx="-.8" cy="-4.300" rx="1.800" ry="1.900" fill="#fff"/>
<circle cx="-5.800" cy="-4" r=".75" fill="#2a1a10"/><circle cx="-1.100" cy="-4" r=".85" fill="#2a1a10"/>
<path d="M-7.600 -6.600l3 1.200M2 -6.800l-3.600 1.400" stroke="#8c0f3c" stroke-width=".9"/>
<path d="M-6.500 .6C-5 2 -2.500 2 -1 .6z" fill="#6b1a1a"/>
<path d="M-4.500 5.500C-7 4.500 -8.500 5.500 -8.500 7C-7 8.500 -5 8 -3.500 7z" fill="#e8236a" stroke="#8c0f3c" stroke-width=".4"/>
<path d="M0 6C-2.500 5.500 -4.500 6.500 -4.500 8C-3 9.500 -1 9 .5 8z" fill="#e8236a" stroke="#8c0f3c" stroke-width=".4"/>
</g>
<rect x="188.900" y="194.400" width="43.300" height="46.800" fill="none" stroke="#1a1a1a" stroke-width=".6"/>
<circle cx="188.9" cy="194.4" r=".7" fill="#111"/>
<circle cx="210.5" cy="194.4" r=".7" fill="#111"/>
<circle cx="232.2" cy="194.4" r=".7" fill="#111"/>
<circle cx="188.9" cy="217.8" r=".7" fill="#111"/>
<circle cx="232.2" cy="217.8" r=".7" fill="#111"/>
<circle cx="188.9" cy="241.2" r=".7" fill="#111"/>
<circle cx="210.5" cy="241.2" r=".7" fill="#111"/>
<circle cx="232.2" cy="241.2" r=".7" fill="#111"/>
</svg>
<div class="a" style="left:655.9px;top:47.8px;width:2.4px;height:246px;background:#484848;"></div>
<div class="a" style="left:658.3px;top:47.8px;width:103.2px;height:246px;background:#484848;"></div>
<div class="a" style="left:761.5px;top:47.8px;width:6.5px;height:246px;background:#3b3b3b;"></div>
<div class="a" style="left:761.6px;top:47.8px;width:3.9px;height:190px;background:#212121;"></div>
<div class="a" style="left:765.9px;top:67.9px;width:2.1px;height:31.8px;background:#dcdcdc;"></div>
<div class="a" style="left:658.3px;top:47.8px;width:103.2px;height:14.1px;background:#1d1d1d;"></div>
<svg class="a" style="left:662px;top:49px" width="12" height="11" viewBox="0 0 12 11"><rect x="1.400" y="1.800" width="8.400" height="5.400" fill="#1d1d1d" stroke="#fff" stroke-width="1"/><rect x=".9" y="6.600" width="9.400" height="1.300" fill="#fff"/><rect x="4" y="7.900" width="3.200" height="1" fill="#fff"/></svg>
<div class="t" style="left:678.2px;top:53px;font-size:6.4px;color:#fff;-webkit-text-stroke:.2px #fff">Scene</div>
<svg class="a" style="left:754.3px;top:53.15px" width="4.8" height="4.1" viewBox="0 0 4.8 4.1"><path d="M1 3.1L2.4 1L3.8 3.1z" fill="#eee"/></svg>
<div class="lbl" style="left:619px;width:80px;top:68px;font-size:5px;">Events</div>
<div class="inp" style="left:705.2px;top:63.1px;width:55.6px;height:10.6px"></div>
<svg class="a" style="left:753.2px;top:66.45px" width="5.2" height="4.3" viewBox="0 0 5.2 4.3"><path d="M1 1L2.6 3.3L4.2 1z" fill="#eee"/></svg>
<div class="lbl" style="left:619px;width:80px;top:80px;font-size:5px;">Aspect Ratio</div>
<div class="inp" style="left:705.2px;top:75.8px;width:55.6px;height:10.6px"></div>
<div class="v" style="left:707px;top:80px;font-size:5px;">16:9 (1920x1080)</div>
<svg class="a" style="left:753.2px;top:79.15px" width="5.2" height="4.3" viewBox="0 0 5.2 4.3"><path d="M1 1L2.6 3.3L4.2 1z" fill="#eee"/></svg>
<div class="lbl" style="left:619px;width:80px;top:93px;font-size:5px;">Background</div>
<div class="inp" style="left:740.5px;top:88.8px;width:20.3px;height:10.6px"></div>
<div class="a" style="left:750.3px;top:89.8px;width:0.9px;height:8.6px;background:#4a4a4a;"></div>
<svg class="a" style="left:753.2px;top:92.15px" width="5.2" height="4.3" viewBox="0 0 5.2 4.3"><path d="M1 1L2.6 3.3L4.2 1z" fill="#eee"/></svg>
<div class="a" style="left:658.3px;top:101.4px;width:103.2px;height:16px;background:#1d1d1d;"></div>
<svg class="a" style="left:662px;top:102px" width="12" height="14" viewBox="0 0 12 14"><path d="M3 3v8.200h3.400M3 6.200h3.400" stroke="#ddd" stroke-width=".7" fill="none"/><circle cx="2.800" cy="3" r="1.700" fill="#fff"/><rect x="5.400" y="4.600" width="3.600" height="3.200" rx="1.200" fill="#fff"/><rect x="5.400" y="9.600" width="3.600" height="3.200" rx="1.200" fill="#fff"/></svg>
<div class="t" style="left:677.9px;top:109px;font-size:6.4px;color:#fff;-webkit-text-stroke:.2px #fff">Hierarchy</div>
<svg class="a" style="left:754.3px;top:108.05px" width="4.8" height="4.1" viewBox="0 0 4.8 4.1"><path d="M1 3.1L2.4 1L3.8 3.1z" fill="#eee"/></svg>
<div class="a" style="left:658.300px;top:117.400px;width:103.200px;height:116.400px;overflow:hidden">
<div class="a" style="left:4.3px;top:4.6px;width:0;height:101.8px;border-left:.8px dashed #9a9a9a;opacity:.75"></div>
<div class="a" style="left:4.7px;top:10.5px;width:6px;height:0;border-top:.8px solid #8f8f8f;opacity:.8"></div>
<div class="a" style="left:3.3px;top:9.5px;width:0;height:0;border-left:1.400px solid transparent;border-right:1.400px solid transparent;border-bottom:2.200px solid #ddd"></div>
<svg class="a" style="left:12px;top:7.9px" width="6" height="6" viewBox="0 0 6 6"><circle cx="3" cy="3" r="2.100" fill="#fff"/></svg>
<svg class="a" style="left:18.6px;top:7.7px" width="8" height="6" viewBox="0 0 8 6"><path d="M.7 3Q4 -.3 7.300 3Q4 6.300 .7 3z" fill="#f0f0f0"/><circle cx="4" cy="3" r="1.250" fill="#333"/><circle cx="3.600" cy="2.600" r=".45" fill="#ddd"/></svg>
<svg class="a" style="left:27.3px;top:6.2px" width="5" height="8" viewBox="0 0 5 8"><path d="M1.300 3.400V2.300a1.200 1.200 0 0 1 2.400 0v1.100" stroke="#808080" stroke-width=".6" fill="none"/><rect x=".9" y="3.400" width="3.200" height="2.900" fill="#808080" fill-opacity=".35" stroke="#808080" stroke-width=".6"/></svg>
<div class="v" style="left:34.2px;top:10.6px;font-size:5.200px;-webkit-text-stroke:.1px #eee;">responsiveImage <span style="font-size:4px;position:relative;top:.2px;margin-left:-.3px">(Card1)</span></div>
<div class="a" style="left:13.7px;top:15.0px;width:6px;height:5.500px;border-left:.8px solid #9a9a9a;border-bottom:.8px solid #9a9a9a;opacity:.8"></div>
<div class="a" style="left:20.1px;top:16.4px;width:62.600px;height:8px;background:#0c0c0c;border-radius:1px"></div>
<svg class="a" style="left:21.6px;top:17.5px" width="6" height="6" viewBox="0 0 6 6"><circle cx="3" cy="3" r="2.100" fill="#fff"/></svg>
<svg class="a" style="left:28.2px;top:17.3px" width="8" height="6" viewBox="0 0 8 6"><path d="M.7 3Q4 -.3 7.300 3Q4 6.300 .7 3z" fill="#f0f0f0"/><circle cx="4" cy="3" r="1.250" fill="#333"/><circle cx="3.600" cy="2.600" r=".45" fill="#ddd"/></svg>
<svg class="a" style="left:36.9px;top:15.8px" width="5" height="8" viewBox="0 0 5 8"><path d="M1.300 3.400V2.300a1.200 1.200 0 0 1 2.400 0v1.100" stroke="#a8a8a8" stroke-width=".6" fill="none"/><rect x=".9" y="3.400" width="3.200" height="2.900" fill="#a8a8a8" fill-opacity=".35" stroke="#a8a8a8" stroke-width=".6"/></svg>
<div class="v" style="left:43.8px;top:19.6px;font-size:5.200px;-webkit-text-stroke:.1px #eee;">image <span style="font-size:4px;position:relative;top:.2px;margin-left:-.3px">(PinkRabbit)</span></div>
<div class="a" style="left:4.7px;top:29.6px;width:6px;height:0;border-top:.8px solid #8f8f8f;opacity:.8"></div>
<div class="a" style="left:3.9px;top:28.6px;width:0;height:0;border-top:1.400px solid transparent;border-bottom:1.400px solid transparent;border-left:2.200px solid #ddd"></div>
<svg class="a" style="left:12px;top:27.0px" width="6" height="6" viewBox="0 0 6 6"><circle cx="3" cy="3" r="2.100" fill="#fff"/></svg>
<svg class="a" style="left:18.6px;top:26.8px" width="8" height="6" viewBox="0 0 8 6"><path d="M.7 3Q4 -.3 7.300 3Q4 6.300 .7 3z" fill="#f0f0f0"/><circle cx="4" cy="3" r="1.250" fill="#333"/><circle cx="3.600" cy="2.600" r=".45" fill="#ddd"/></svg>
<svg class="a" style="left:27.3px;top:25.3px" width="5" height="8" viewBox="0 0 5 8"><path d="M1.300 3.400V2.300a1.200 1.200 0 0 1 2.400 0v1.100" stroke="#808080" stroke-width=".6" fill="none"/><rect x=".9" y="3.400" width="3.200" height="2.900" fill="#808080" fill-opacity=".35" stroke="#808080" stroke-width=".6"/></svg>
<div class="v" style="left:34.2px;top:29.6px;font-size:5.200px;-webkit-text-stroke:.1px #eee;">responsiveImage <span style="font-size:4px;position:relative;top:.2px;margin-left:-.3px">(Card2)</span></div>
<div class="a" style="left:4.7px;top:39.2px;width:6px;height:0;border-top:.8px solid #8f8f8f;opacity:.8"></div>
<div class="a" style="left:3.3px;top:38.2px;width:0;height:0;border-left:1.400px solid transparent;border-right:1.400px solid transparent;border-bottom:2.200px solid #ddd"></div>
<svg class="a" style="left:12px;top:36.6px" width="6" height="6" viewBox="0 0 6 6"><circle cx="3" cy="3" r="2.100" fill="#fff"/></svg>
<svg class="a" style="left:18.6px;top:36.4px" width="8" height="6" viewBox="0 0 8 6"><path d="M.7 3Q4 -.3 7.300 3Q4 6.300 .7 3z" fill="#f0f0f0"/><circle cx="4" cy="3" r="1.250" fill="#333"/><circle cx="3.600" cy="2.600" r=".45" fill="#ddd"/></svg>
<svg class="a" style="left:27.3px;top:34.9px" width="5" height="8" viewBox="0 0 5 8"><path d="M1.300 3.400V2.300a1.200 1.200 0 0 1 2.400 0v1.100" stroke="#808080" stroke-width=".6" fill="none"/><rect x=".9" y="3.400" width="3.200" height="2.900" fill="#808080" fill-opacity=".35" stroke="#808080" stroke-width=".6"/></svg>
<div class="v" style="left:34.2px;top:38.6px;font-size:5.200px;-webkit-text-stroke:.1px #eee;">responsiveImage <span style="font-size:4px;position:relative;top:.2px;margin-left:-.3px">(Card3)</span></div>
<div class="a" style="left:13.7px;top:43.6px;width:6px;height:5.500px;border-left:.8px solid #9a9a9a;border-bottom:.8px solid #9a9a9a;opacity:.8"></div>
<svg class="a" style="left:21.6px;top:46.1px" width="6" height="6" viewBox="0 0 6 6"><circle cx="3" cy="3" r="2.100" fill="#fff"/></svg>
<svg class="a" style="left:28.2px;top:45.9px" width="8" height="6" viewBox="0 0 8 6"><path d="M.7 3Q4 -.3 7.300 3Q4 6.300 .7 3z" fill="#f0f0f0"/><circle cx="4" cy="3" r="1.250" fill="#333"/><circle cx="3.600" cy="2.600" r=".45" fill="#ddd"/></svg>
<svg class="a" style="left:36.9px;top:44.4px" width="5" height="8" viewBox="0 0 5 8"><path d="M1.300 3.400V2.300a1.200 1.200 0 0 1 2.400 0v1.100" stroke="#808080" stroke-width=".6" fill="none"/><rect x=".9" y="3.400" width="3.200" height="2.900" fill="#808080" fill-opacity=".35" stroke="#808080" stroke-width=".6"/></svg>
<div class="v" style="left:43.8px;top:48.6px;font-size:5.200px;-webkit-text-stroke:.1px #eee;">image <span style="font-size:4px;position:relative;top:.2px;margin-left:-.3px">(GreenRabbit)</span></div>
<div class="a" style="left:4.7px;top:58.3px;width:6px;height:0;border-top:.8px solid #8f8f8f;opacity:.8"></div>
<div class="a" style="left:3.9px;top:57.3px;width:0;height:0;border-top:1.400px solid transparent;border-bottom:1.400px solid transparent;border-left:2.200px solid #ddd"></div>
<svg class="a" style="left:12px;top:55.7px" width="6" height="6" viewBox="0 0 6 6"><circle cx="3" cy="3" r="2.100" fill="#fff"/></svg>
<svg class="a" style="left:18.6px;top:55.5px" width="8" height="6" viewBox="0 0 8 6"><path d="M.7 3Q4 -.3 7.300 3Q4 6.300 .7 3z" fill="#f0f0f0"/><circle cx="4" cy="3" r="1.250" fill="#333"/><circle cx="3.600" cy="2.600" r=".45" fill="#ddd"/></svg>
<svg class="a" style="left:27.3px;top:54.0px" width="5" height="8" viewBox="0 0 5 8"><path d="M1.300 3.400V2.300a1.200 1.200 0 0 1 2.400 0v1.100" stroke="#808080" stroke-width=".6" fill="none"/><rect x=".9" y="3.400" width="3.200" height="2.900" fill="#808080" fill-opacity=".35" stroke="#808080" stroke-width=".6"/></svg>
<div class="v" style="left:34.2px;top:57.6px;font-size:5.200px;-webkit-text-stroke:.1px #eee;">responsiveImage <span style="font-size:4px;position:relative;top:.2px;margin-left:-.3px">(Card4)</span></div>
<div class="a" style="left:4.7px;top:67.8px;width:6px;height:0;border-top:.8px solid #8f8f8f;opacity:.8"></div>
<svg class="a" style="left:12px;top:65.2px" width="6" height="6" viewBox="0 0 6 6"><circle cx="3" cy="3" r="2.100" fill="#fff"/></svg>
<svg class="a" style="left:18.6px;top:65.0px" width="8" height="6" viewBox="0 0 8 6"><path d="M.7 3Q4 -.3 7.300 3Q4 6.300 .7 3z" fill="#f0f0f0"/><circle cx="4" cy="3" r="1.250" fill="#333"/><circle cx="3.600" cy="2.600" r=".45" fill="#ddd"/></svg>
<svg class="a" style="left:27.3px;top:63.5px" width="5" height="8" viewBox="0 0 5 8"><path d="M1.300 3.400V2.300a1.200 1.200 0 0 1 2.400 0v1.100" stroke="#808080" stroke-width=".6" fill="none"/><rect x=".9" y="3.400" width="3.200" height="2.900" fill="#808080" fill-opacity=".35" stroke="#808080" stroke-width=".6"/></svg>
<div class="v" style="left:34.2px;top:67.6px;font-size:5.200px;-webkit-text-stroke:.1px #eee;">responsiveImage <span style="font-size:4px;position:relative;top:.2px;margin-left:-.3px">(responsiveIma</span></div>
<div class="a" style="left:4.7px;top:77.4px;width:6px;height:0;border-top:.8px solid #8f8f8f;opacity:.8"></div>
<svg class="a" style="left:12px;top:74.8px" width="6" height="6" viewBox="0 0 6 6"><circle cx="3" cy="3" r="2.100" fill="#fff"/></svg>
<svg class="a" style="left:18.6px;top:74.6px" width="8" height="6" viewBox="0 0 8 6"><path d="M.7 3Q4 -.3 7.300 3Q4 6.300 .7 3z" fill="#f0f0f0"/><circle cx="4" cy="3" r="1.250" fill="#333"/><circle cx="3.600" cy="2.600" r=".45" fill="#ddd"/></svg>
<svg class="a" style="left:27.3px;top:73.1px" width="5" height="8" viewBox="0 0 5 8"><path d="M1.300 3.400V2.300a1.200 1.200 0 0 1 2.400 0v1.100" stroke="#808080" stroke-width=".6" fill="none"/><rect x=".9" y="3.400" width="3.200" height="2.900" fill="#808080" fill-opacity=".35" stroke="#808080" stroke-width=".6"/></svg>
<div class="v" style="left:34.2px;top:76.6px;font-size:5.200px;-webkit-text-stroke:.1px #eee;">responsiveImage <span style="font-size:4px;position:relative;top:.2px;margin-left:-.3px">(responsiveIma</span></div>
<div class="a" style="left:4.7px;top:86.9px;width:6px;height:0;border-top:.8px solid #8f8f8f;opacity:.8"></div>
<svg class="a" style="left:12px;top:84.3px" width="6" height="6" viewBox="0 0 6 6"><circle cx="3" cy="3" r="2.100" fill="#fff"/></svg>
<svg class="a" style="left:18.6px;top:84.1px" width="8" height="6" viewBox="0 0 8 6"><path d="M.7 3Q4 -.3 7.300 3Q4 6.300 .7 3z" fill="#f0f0f0"/><circle cx="4" cy="3" r="1.250" fill="#333"/><circle cx="3.600" cy="2.600" r=".45" fill="#ddd"/></svg>
<svg class="a" style="left:27.3px;top:82.6px" width="5" height="8" viewBox="0 0 5 8"><path d="M1.300 3.400V2.300a1.200 1.200 0 0 1 2.400 0v1.100" stroke="#808080" stroke-width=".6" fill="none"/><rect x=".9" y="3.400" width="3.200" height="2.900" fill="#808080" fill-opacity=".35" stroke="#808080" stroke-width=".6"/></svg>
<div class="v" style="left:34.2px;top:86.6px;font-size:5.200px;-webkit-text-stroke:.1px #eee;font-style:italic;font-weight:bold;">responsiveImage <span style="font-size:4px;position:relative;top:.2px;margin-left:-.3px">(responsiveIma</span></div>
<div class="a" style="left:4.7px;top:96.4px;width:6px;height:0;border-top:.8px solid #8f8f8f;opacity:.8"></div>
<svg class="a" style="left:12px;top:93.8px" width="6" height="6" viewBox="0 0 6 6"><circle cx="3" cy="3" r="2.100" fill="#fff"/></svg>
<svg class="a" style="left:18.6px;top:93.6px" width="8" height="6" viewBox="0 0 8 6"><path d="M.7 3Q4 -.3 7.300 3Q4 6.300 .7 3z" fill="#f0f0f0"/><circle cx="4" cy="3" r="1.250" fill="#333"/><circle cx="3.600" cy="2.600" r=".45" fill="#ddd"/></svg>
<svg class="a" style="left:27.3px;top:92.1px" width="5" height="8" viewBox="0 0 5 8"><path d="M1.300 3.400V2.300a1.200 1.200 0 0 1 2.400 0v1.100" stroke="#808080" stroke-width=".6" fill="none"/><rect x=".9" y="3.400" width="3.200" height="2.900" fill="#808080" fill-opacity=".35" stroke="#808080" stroke-width=".6"/></svg>
<div class="v" style="left:34.2px;top:96.6px;font-size:5.200px;-webkit-text-stroke:.1px #eee;">text <span style="font-size:4px;position:relative;top:.2px;margin-left:-.3px">(score)</span></div>
<div class="a" style="left:4.7px;top:106.0px;width:6px;height:0;border-top:.8px solid #8f8f8f;opacity:.8"></div>
<svg class="a" style="left:12px;top:103.4px" width="6" height="6" viewBox="0 0 6 6"><circle cx="3" cy="3" r="2.100" fill="#fff"/></svg>
<svg class="a" style="left:18.6px;top:103.2px" width="8" height="6" viewBox="0 0 8 6"><path d="M.7 3Q4 -.3 7.300 3Q4 6.300 .7 3z" fill="#f0f0f0"/><circle cx="4" cy="3" r="1.250" fill="#333"/><circle cx="3.600" cy="2.600" r=".45" fill="#ddd"/></svg>
<svg class="a" style="left:27.3px;top:101.7px" width="5" height="8" viewBox="0 0 5 8"><path d="M1.300 3.400V2.300a1.200 1.200 0 0 1 2.400 0v1.100" stroke="#808080" stroke-width=".6" fill="none"/><rect x=".9" y="3.400" width="3.200" height="2.900" fill="#808080" fill-opacity=".35" stroke="#808080" stroke-width=".6"/></svg>
<div class="v" style="left:34.2px;top:105.6px;font-size:5.200px;-webkit-text-stroke:.1px #eee;">responsiveImage <span style="font-size:4px;position:relative;top:.2px;margin-left:-.3px">(responsiveIma</span></div>
</div>
<div class="a" style="left:658.3px;top:233.8px;width:103.2px;height:17px;background:#1d1d1d;"></div>
<svg class="a" style="left:662px;top:235px" width="12" height="14" viewBox="0 0 12 14"><path d="M1.400 1.800h4.800l2.800 2.800v7H1.400z" fill="#1d1d1d" stroke="#fff" stroke-width="1"/><path d="M2.600 6.400h5.200v4.200H2.600z" fill="#eee"/><path d="M2.600 7.700h5.200" stroke="#555" stroke-width=".5"/></svg>
<div class="t" style="left:677.9px;top:241px;font-size:6.4px;color:#fff;-webkit-text-stroke:.2px #fff">Files</div>
<svg class="a" style="left:754.3px;top:240.15px" width="4.8" height="4.1" viewBox="0 0 4.8 4.1"><path d="M1 3.1L2.4 1L3.8 3.1z" fill="#eee"/></svg>
<div class="a" style="left:658.3px;top:250.8px;width:103.2px;height:12.1px;background:#282828;"></div>
<div class="v" style="left:674.5px;top:256px;font-size:5.3px;color:#f0f0f0;-webkit-text-stroke:.12px #f0f0f0">Scripts files</div>
<svg class="a" style="left:754.3px;top:254.95px" width="4.8" height="4.1" viewBox="0 0 4.8 4.1"><path d="M1 3.1L2.4 1L3.8 3.1z" fill="#eee"/></svg>
<svg class="a" style="left:746.800px;top:264.600px" width="8" height="8" viewBox="0 0 8 8"><circle cx="4" cy="4" r="3.600" fill="#b4b4b4"/><path d="M4 1.600v4.800M1.600 4h4.800" stroke="#f4f4f4" stroke-width=".8"/></svg>
<div class="a" style="left:658.3px;top:274.2px;width:103.2px;height:12px;background:#282828;"></div>
<div class="v" style="left:674.5px;top:279px;font-size:5.3px;color:#f0f0f0;-webkit-text-stroke:.12px #f0f0f0">Css files</div>
<svg class="a" style="left:754.3px;top:278.35px" width="4.8" height="4.1" viewBox="0 0 4.8 4.1"><path d="M1 3.1L2.4 1L3.8 3.1z" fill="#eee"/></svg>
<svg class="a" style="left:746.800px;top:288.200px" width="8" height="1.600" viewBox="0 0 8 1.600"><circle cx="4" cy="4" r="3.600" fill="#b4b4b4"/><path d="M4 1.600v4.800M1.600 4h4.800" stroke="#f4f4f4" stroke-width=".8"/></svg>
<div class="a" style="left:658.3px;top:289.7px;width:90px;height:4.1px;background:#222;"></div>
<div class="a" style="left:748.3px;top:289.7px;width:13.3px;height:4.1px;background:#3d3d3d;"></div>
<div class="a" style="left:761.7px;top:289.8px;width:4.8px;height:4px;background:#f0f0f0;"></div>
<div class="a" style="left:111.8px;top:293.7px;width:656.2px;height:3px;background:#3e3e3e;"></div>
<svg class="a" style="left:430px;top:294px" width="20" height="3" viewBox="430 294 20 3"><path d="M430.800 295.400l1.800-1v2zM449.200 295.400l-1.800-1v2z" fill="#eee"/><rect x="436.800" y="295" width="6.500" height=".8" fill="#ddd"/></svg>
<div class="a" style="left:111.8px;top:296.5px;width:3.2px;height:118px;background:#474747;"></div>
<div class="a" style="left:115px;top:296.5px;width:647.2px;height:118px;background:#3a3a3a;"></div>
<div class="a" style="left:762.2px;top:296.5px;width:5.8px;height:118px;background:#333;"></div>
<div class="a" style="left:762.2px;top:296.5px;width:3.2px;height:82px;background:#191919;"></div>
<div class="a" style="left:115px;top:296.5px;width:103.4px;height:20.2px;background:#1e1e1e;"></div>
<div class="a" style="left:220px;top:296.5px;width:542.2px;height:11.3px;background:#1b1b1b;"></div>
<div class="a" style="left:220px;top:307.8px;width:542.2px;height:9px;background:#2b2b2b;"></div>
<div class="a" style="left:117.400px;top:300px;width:12px;height:6.800px;border-radius:3.400px;background:linear-gradient(90deg,#4c4c4c,#8a8a8a 50%,#c8c8c8)"></div><div class="a" style="left:122.800px;top:300.200px;width:6.600px;height:6.600px;border-radius:50%;background:#fff"></div>
<div class="t" style="left:134.3px;top:303px;font-size:6.4px;color:#fff;-webkit-text-stroke:.15px #fff">Animations</div>
<svg class="a" style="left:186px;top:301px" width="28" height="11" viewBox="186 301 28 11"><path d="M188.200 303.600l5.200 3-5.200 3z" fill="#fff"/><path d="M208.500 304.800A2.500 2.500 0 1 0 209.100 307.800" fill="none" stroke="#fff" stroke-width="1.200"/><path d="M207.100 303.500h2.700v2.700z" fill="#fff"/></svg>
<div class="a" style="left:115px;top:316.6px;width:103.4px;height:92.4px;background:#3d3d3d;"></div>
<div class="a" style="left:220px;top:316.6px;width:542.2px;height:92.4px;background:#3a3a3a;"></div>
<svg class="a" style="left:115px;top:316px" width="648" height="94" viewBox="115 316 648 94"><rect x="115" y="324.65" width="647.200" height=".7" fill="#2b2b2b"/><rect x="115" y="333.05" width="647.200" height=".7" fill="#2b2b2b"/><rect x="115" y="333.40" width="647.200" height="8.40" fill="#262626"/><rect x="115" y="349.85" width="647.200" height=".7" fill="#2b2b2b"/><rect x="115" y="358.25" width="647.200" height=".7" fill="#2b2b2b"/><rect x="115" y="366.65" width="647.200" height=".7" fill="#2b2b2b"/><rect x="115" y="375.05" width="647.200" height=".7" fill="#2b2b2b"/><rect x="115" y="383.45" width="647.200" height=".7" fill="#2b2b2b"/><rect x="115" y="391.85" width="647.200" height=".7" fill="#2b2b2b"/><rect x="115" y="400.25" width="647.200" height=".7" fill="#2b2b2b"/><rect x="115" y="408.65" width="647.200" height=".7" fill="#2b2b2b"/></svg>
<div class="v" style="left:117.7px;top:320px;font-size:5.6px;color:#f2f2f2;-webkit-text-stroke:.1px #f2f2f2">Card1</div>
<div class="v" style="left:117.7px;top:328px;font-size:5.6px;color:#f2f2f2;-webkit-text-stroke:.1px #f2f2f2">PinkRabbit</div>
<div class="v" style="left:117.7px;top:345px;font-size:5.6px;color:#f2f2f2;-webkit-text-stroke:.1px #f2f2f2">Card2</div>
<div class="v" style="left:117.7px;top:353px;font-size:5.6px;color:#f2f2f2;-webkit-text-stroke:.1px #f2f2f2">Bluerabbit</div>
<div class="v" style="left:117.7px;top:362px;font-size:5.6px;color:#f2f2f2;-webkit-text-stroke:.1px #f2f2f2">Card3</div>
<div class="v" style="left:117.7px;top:370px;font-size:5.6px;color:#f2f2f2;-webkit-text-stroke:.1px #f2f2f2">Card4</div>
<div class="v" style="left:117.7px;top:379px;font-size:5.6px;color:#f2f2f2;-webkit-text-stroke:.1px #f2f2f2">Yellowrabbit</div>
<div class="v" style="left:117.7px;top:387px;font-size:5.6px;color:#f2f2f2;-webkit-text-stroke:.1px #f2f2f2">responsiveImage5</div>
<div class="v" style="left:117.7px;top:395px;font-size:5.6px;color:#f2f2f2;-webkit-text-stroke:.1px #f2f2f2">responsiveImage6</div>
<div class="v" style="left:117.7px;top:404px;font-size:5.6px;color:#f2f2f2;-webkit-text-stroke:.1px #f2f2f2">responsiveImage7</div>
<div class="v" style="left:199.2px;top:336px;font-size:4.5px;color:#e4e4e4;">top</div>
<svg class="a" style="left:209px;top:334.60px" width="6" height="6" viewBox="0 0 6 6"><circle cx="3" cy="3" r="1.500" fill="none" stroke="#fff" stroke-width="1.100"/></svg>
<svg class="a" style="left:220px;top:335.10px" width="4" height="5" viewBox="0 0 4 5"><path d="M.5 1l2.400 1.500-2.400 1.500z" fill="#eee"/></svg>
<div class="a" style="left:218.3px;top:296.5px;width:1.7px;height:112.5px;background:#585858;"></div>
<div class="a" style="left:217.8px;top:349px;width:1.4px;height:6px;background:#909090;"></div>
<svg class="a" style="left:218px;top:307px" width="546" height="11" viewBox="218 307 546 11" font-family="Liberation Sans, sans-serif"><text x="221.4" y="312.900" font-size="4.200" fill="#e4e4e4">0</text><text x="271.3" y="312.900" font-size="4.200" fill="#e4e4e4">500</text><text x="321.3" y="312.900" font-size="4.200" fill="#e4e4e4">1000</text><text x="371.2" y="312.900" font-size="4.200" fill="#e4e4e4">1500</text><text x="421.2" y="312.900" font-size="4.200" fill="#e4e4e4">2000</text><text x="471.1" y="312.900" font-size="4.200" fill="#e4e4e4">2500</text><text x="521.1" y="312.900" font-size="4.200" fill="#e4e4e4">3000</text><text x="571.1" y="312.900" font-size="4.200" fill="#e4e4e4">3500</text><text x="621.0" y="312.900" font-size="4.200" fill="#e4e4e4">4000</text><text x="670.9" y="312.900" font-size="4.200" fill="#e4e4e4">4500</text><text x="720.9" y="312.900" font-size="4.200" fill="#e4e4e4">5000</text><path d="M220.0 308.700v6.500M230.0 308.700v2.300M240.0 308.700v2.300M250.0 308.700v2.300M260.0 308.700v2.300M269.9 308.700v6.500M279.9 308.700v2.300M289.9 308.700v2.300M299.9 308.700v2.300M309.9 308.700v2.300M319.9 308.700v6.500M329.9 308.700v2.300M339.9 308.700v2.300M349.9 308.700v2.300M359.9 308.700v2.300M369.9 308.700v6.500M379.8 308.700v2.300M389.8 308.700v2.300M399.8 308.700v2.300M409.8 308.700v2.300M419.8 308.700v6.500M429.8 308.700v2.300M439.8 308.700v2.300M449.8 308.700v2.300M459.8 308.700v2.300M469.8 308.700v6.500M479.7 308.700v2.300M489.7 308.700v2.300M499.7 308.700v2.300M509.7 308.700v2.300M519.7 308.700v6.500M529.7 308.700v2.300M539.7 308.700v2.300M549.7 308.700v2.300M559.7 308.700v2.300M569.7 308.700v6.500M579.6 308.700v2.300M589.6 308.700v2.300M599.6 308.700v2.300M609.6 308.700v2.300M619.6 308.700v6.500M629.6 308.700v2.300M639.6 308.700v2.300M649.6 308.700v2.300M659.6 308.700v2.300M669.5 308.700v6.500M679.5 308.700v2.300M689.5 308.700v2.300M699.5 308.700v2.300M709.5 308.700v2.300M719.5 308.700v6.500M729.5 308.700v2.300M739.5 308.700v2.300M749.5 308.700v2.300M759.5 308.700v2.300" stroke="#d8d8d8" stroke-width=".7" fill="none"/></svg>
<div class="a" style="left:240.1px;top:312px;width:0.9px;height:96.8px;background:#2f8cf0;"></div>
<svg class="a" style="left:238px;top:309px" width="6" height="8" viewBox="0 0 6 8"><path d="M1 1.900a2 1.600 0 0 1 4 0v3l-2 2.200-2-2.200z" fill="#2f8cf0"/></svg>
<svg class="a" style="left:238px;top:335.10px" width="5" height="5" viewBox="0 0 5 5"><path d="M2.500 .7l1.700 1.800-1.700 1.800-1.700-1.800z" fill="#fff" stroke="#2f8cf0" stroke-width=".3"/></svg>
<div class="a" style="left:116.300px;top:323.600px;width:130.800px;height:18.600px;border:1px solid #e8232e"></div>
<div class="a" style="left:220px;top:409.2px;width:542.2px;height:3.1px;background:#1f1f1f;"></div>
<div class="a" style="left:340px;top:409.9px;width:29px;height:1.7px;background:#4a4a4a;border-radius:1px"></div>
<div class="a" style="left:0px;top:414.4px;width:768px;height:1.6px;background:#0e0e0e;"></div>
<div class="a" style="left:177px;top:414.4px;width:17px;height:1.6px;background:#3a3a3a;"></div>
</div></body></html>
